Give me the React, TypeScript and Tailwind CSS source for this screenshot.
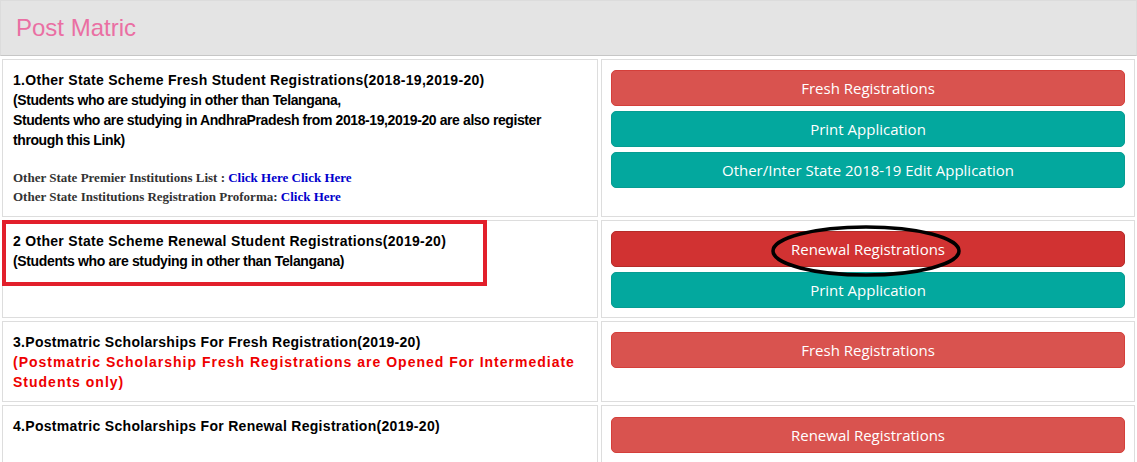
export default function App() {
  const btn =
    "flex h-[36px] w-full items-center justify-center rounded-[5px] border text-[15px] text-white font-['Open_Sans',sans-serif]"
  const red = "border-[#d43f3a] bg-[#d9534f]"
  const teal = "border-[#079c92] bg-[#03a89e]"
  const cell = "border border-[#dddddd] bg-white"
  const txt = "font-['Liberation_Sans',Arial,sans-serif] text-[14px] font-bold leading-[20px]"

  return (
    <div className="min-h-[462px] w-[1137px] bg-white">
      {/* header */}
      <div className="flex h-[56px] items-center border border-b-[#c6c6c6] border-[#dcdcdc] bg-[#e4e4e4] pl-[15px]">
        <h2 className="font-['Liberation_Sans',Arial,sans-serif] text-[24px] text-[#ea6fa3]">Post Matric</h2>
      </div>

      <div className="grid grid-cols-[596px_534px] gap-x-[3px] gap-y-[3px] pl-[2px] pt-[3px]">
        {/* row 1 */}
        <div className={`${cell} px-[10px] pt-[10px] pb-[10px]`}>
          <div className={`${txt} tracking-[0.3px] text-black`}>1.Other State Scheme Fresh Student Registrations(2018-19,2019-20)</div>
          <div className={`${txt} tracking-[-0.4px] text-black`}>
            (Students who are studying in other than Telangana,
            <br />
            Students who are studying in AndhraPradesh from 2018-19,2019-20 are also register through this Link)
          </div>
          <div className="mt-[18px] font-['Liberation_Serif','Times_New_Roman',serif] text-[13px] font-bold leading-[19px] text-[#333333]">
            <div>
              Other State Premier Institutions List : <span className="text-[#0000cc]">Click Here Click Here</span>
            </div>
            <div>
              Other State Institutions Registration Proforma: <span className="text-[#0000cc]">Click Here</span>
            </div>
          </div>
        </div>
        <div className={`${cell} flex flex-col gap-[5px] pl-[9px] pr-[9px] pt-[10px]`}>
          <div className={`${btn} ${red}`}>Fresh Registrations</div>
          <div className={`${btn} ${teal}`}>Print Application</div>
          <div className={`${btn} ${teal}`}>Other/Inter State 2018-19 Edit Application</div>
        </div>

        {/* row 2 */}
        <div className={`${cell} relative px-[10px] pt-[10px]`}>
          <div className={`${txt} tracking-[0.3px] text-black`}>2 Other State Scheme Renewal Student Registrations(2019-20)</div>
          <div className={`${txt} tracking-[-0.35px] text-black`}>(Students who are studying in other than Telangana)</div>
          <div className="pointer-events-none absolute -left-[1px] -top-[1px] h-[66px] w-[485px] border-4 border-[#e21f2b]" />
        </div>
        <div className={`${cell} flex flex-col gap-[5px] pl-[9px] pr-[9px] pt-[10px] pb-[9px]`}>
          <div className={`${btn} relative border-[#b52b28] bg-[#d13232]`}>
            Renewal Registrations
            <svg className="pointer-events-none absolute left-[158px] top-[-8px]" width="192" height="54" viewBox="0 0 192 54">
              <ellipse cx="96" cy="27" rx="93" ry="24" fill="none" stroke="#000" strokeWidth="3.5" />
            </svg>
          </div>
          <div className={`${btn} ${teal}`}>Print Application</div>
        </div>

        {/* row 3 */}
        <div className={`${cell} px-[10px] pt-[10px] pb-[9px]`}>
          <div className={`${txt} tracking-[0.3px] text-black`}>3.Postmatric Scholarships For Fresh Registration(2019-20)</div>
          <div className={`${txt} tracking-[1px] text-[#ee0000]`}>
            (Postmatric Scholarship Fresh Registrations are Opened For Intermediate Students only)
          </div>
        </div>
        <div className={`${cell} pl-[9px] pr-[9px] pt-[10px]`}>
          <div className={`${btn} ${red}`}>Fresh Registrations</div>
        </div>

        {/* row 4 */}
        <div className={`${cell} h-[70px] px-[10px] pt-[10px]`}>
          <div className={`${txt} tracking-[0.3px] text-black`}>4.Postmatric Scholarships For Renewal Registration(2019-20)</div>
        </div>
        <div className={`${cell} h-[70px] pl-[9px] pr-[9px] pt-[11px]`}>
          <div className={`${btn} ${red}`}>Renewal Registrations</div>
        </div>
      </div>
    </div>
  )
}
